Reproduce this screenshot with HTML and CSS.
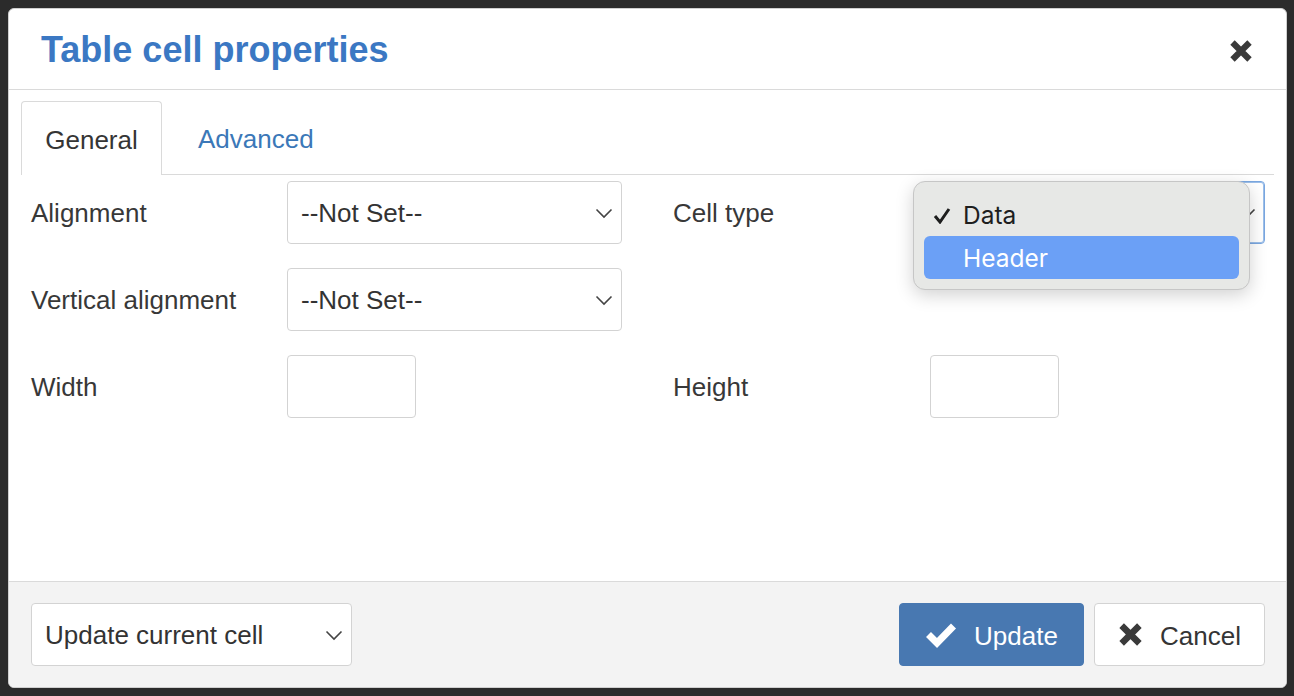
FILE: index.html
```html
<!DOCTYPE html>
<html lang="en">
<head>
<meta charset="utf-8">
<title>Table cell properties</title>
<link rel="stylesheet" href="styles.css">
</head>
<body>
<div class="dialog">
  <div class="dlg-head">
    <h1 class="dlg-title">Table cell properties</h1>
    <button class="close-btn" aria-label="Close">
      <svg width="24" height="24" viewBox="0 0 24 24"><path d="M3.5 3.5 L20.5 20.5 M20.5 3.5 L3.5 20.5" stroke="#3a3a3a" stroke-width="6.2" stroke-linecap="butt" fill="none"/></svg>
    </button>
  </div>
  <div class="dlg-body">
    <div class="tabs">
      <div class="tab active">General</div>
      <div class="tab">Advanced</div>
    </div>
    <div class="form">
      <div class="label">Alignment</div>
      <div class="select"><span>--Not Set--</span><svg class="chev" width="18" height="11" viewBox="0 0 18 11"><polyline points="1.5,1.5 9,9 16.5,1.5" fill="none" stroke="#444" stroke-width="1.6"/></svg></div>
      <div class="spacer"></div>
      <div class="label">Cell type</div>
      <div class="select focus"><span></span><svg class="chev" width="18" height="11" viewBox="0 0 18 11"><polyline points="1.5,1.5 9,9 16.5,1.5" fill="none" stroke="#444" stroke-width="1.6"/></svg></div>

      <div class="label">Vertical alignment</div>
      <div class="select"><span>--Not Set--</span><svg class="chev" width="18" height="11" viewBox="0 0 18 11"><polyline points="1.5,1.5 9,9 16.5,1.5" fill="none" stroke="#444" stroke-width="1.6"/></svg></div>
      <div class="spacer"></div>
      <div class="label"></div>
      <div></div>

      <div class="label">Width</div>
      <div><div class="input"></div></div>
      <div class="spacer"></div>
      <div class="label">Height</div>
      <div><div class="input"></div></div>
    </div>
    <div class="popup">
      <div class="opt"><svg class="tick" width="18" height="17" viewBox="0 0 18 17"><polyline points="2,9 7,15 16,2" fill="none" stroke="#1e1e1e" stroke-width="3"/></svg>Data</div>
      <div class="opt sel">Header</div>
    </div>
  </div>
  <div class="dlg-foot">
    <div class="select foot-select"><span>Update current cell</span><svg class="chev" width="18" height="11" viewBox="0 0 18 11"><polyline points="1.5,1.5 9,9 16.5,1.5" fill="none" stroke="#444" stroke-width="1.6"/></svg></div>
    <div class="btns">
      <button class="btn primary"><svg width="32" height="26" viewBox="0 0 32 26"><polyline points="3.5,12.5 12,21 28.5,4" fill="none" stroke="#fff" stroke-width="7"/></svg><span class="btn-text">Update</span></button>
      <button class="btn cancel"><svg width="25" height="25" viewBox="0 0 24 24"><path d="M3.5 3.5 L20.5 20.5 M20.5 3.5 L3.5 20.5" stroke="#3a3a3a" stroke-width="6.2" fill="none"/></svg><span class="btn-text">Cancel</span></button>
    </div>
  </div>
</div>
</body>
</html>
```
FILE: styles.css
```css
html, body {
  margin: 0;
  padding: 0;
}
body {
  background: #2b2b2b;
  font-family: "Liberation Sans", Arial, Helvetica, sans-serif;
  color: #353535;
  padding: 8px 7px 8px 8px;
  height: 696px;
  box-sizing: border-box;
}
.dialog {
  width: 1279px;
  height: 680px;
  box-sizing: border-box;
  background: #fff;
  border: 1px solid #cfcfcf;
  border-radius: 6px;
  overflow: hidden;
  display: flex;
  flex-direction: column;
}
.dlg-head {
  height: 80px;
  border-bottom: 1px solid #dadada;
  display: flex;
  align-items: center;
  justify-content: space-between;
  padding: 0 33px 0 32px;
  flex: none;
}
.dlg-title {
  margin: 0;
  font-size: 36px;
  font-weight: bold;
  color: #3b78c3;
  line-height: 1;
  padding-top: 1px;
}
.close-btn {
  border: 0;
  background: none;
  padding: 0;
  width: 24px;
  height: 24px;
  display: flex;
  margin-top: 4px;
}
.dlg-body {
  flex: 1;
  position: relative;
}
.tabs {
  margin: 11px 12px 0 12px;
  border-bottom: 1px solid #dadada;
  display: flex;
  height: 73px;
}
.tab {
  font-size: 26px;
  color: #3b78b8;
  padding: 0 26px;
  display: flex;
  align-items: center;
  height: 74px;
  box-sizing: border-box;
  margin-left: 10px;
  padding-top: 3px;
}
.tab.active {
  margin-left: 0;
  color: #353535;
  background: #fff;
  border: 1px solid #dadada;
  border-bottom: 0;
  border-radius: 4px 4px 0 0;
  width: 141px;
  justify-content: center;
  padding: 3px 0 0 0;
}
.form {
  display: grid;
  grid-template-columns: 256px 335px 51px 257px 335px;
  grid-auto-rows: 63px;
  row-gap: 24px;
  padding: 6px 0 0 22px;
}
.label {
  font-size: 26px;
  display: flex;
  align-items: center;
  color: #383838;
  padding-top: 2px;
}
.select {
  border: 1px solid #d3d3d3;
  border-radius: 4px;
  background: #fff;
  display: flex;
  align-items: center;
  justify-content: space-between;
  padding: 2px 8px 0 13px;
  font-size: 26px;
  color: #333;
  box-sizing: border-box;
  height: 63px;
}
.select.focus {
  border-color: #7aa7e0;
  box-shadow: inset 0 0 0 1px #9dbfe9;
}
.chev {
  flex: none;
  margin-top: -1px;
}
.input {
  width: 129px;
  height: 63px;
  box-sizing: border-box;
  border: 1px solid #d3d3d3;
  border-radius: 4px;
  background: #fff;
}
.popup {
  position: absolute;
  left: 904px;
  top: 91px;
  width: 337px;
  height: 109px;
  box-sizing: border-box;
  background: #e7e8e6;
  border: 1px solid #c6c6c6;
  border-radius: 12px;
  box-shadow: 0 5px 18px rgba(0, 0, 0, 0.18);
  padding: 11px 10px 0 10px;
  font-family: Inter, "Liberation Sans", sans-serif;
}
.opt {
  height: 43px;
  display: flex;
  align-items: center;
  padding-left: 39px;
  font-size: 24.5px;
  color: #1e1e1e;
  border-radius: 6px;
  position: relative;
}
.opt .tick {
  position: absolute;
  left: 9px;
  top: 14px;
}
.opt.sel {
  background: #6ba0f6;
  color: #fff;
}
.dlg-foot {
  flex: none;
  height: 106px;
  box-sizing: border-box;
  border-top: 1px solid #dadada;
  background: #f3f3f3;
  display: flex;
  align-items: flex-start;
  justify-content: space-between;
  padding: 21px 21px 0 22px;
}
.foot-select {
  width: 321px;
}
.btns {
  display: flex;
  gap: 10px;
}
.btn {
  height: 63px;
  box-sizing: border-box;
  border: 1px solid #d3d3d3;
  border-radius: 4px;
  background: #fff;
  color: #353535;
  font-family: "Liberation Sans", Arial, sans-serif;
  font-size: 26px;
  display: flex;
  align-items: center;
  gap: 17px;
  padding: 0 0 0 23px;
}
.btn-text {
  padding-top: 3px;
}
.btn.primary {
  background: #4878b1;
  border-color: #4878b1;
  color: #fff;
  width: 185px;
  padding-left: 25px;
}
.btn.cancel {
  width: 171px;
}
```
